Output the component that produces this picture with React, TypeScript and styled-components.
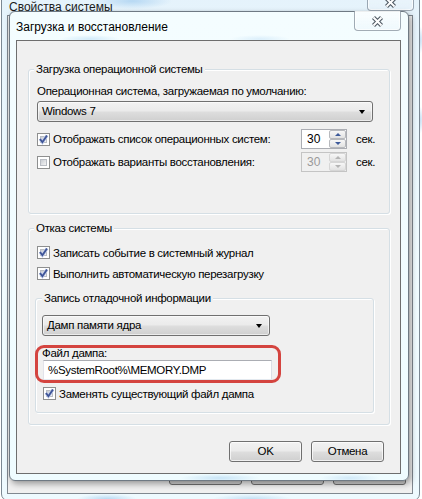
import React from 'react';
import styled, { createGlobalStyle } from 'styled-components';

const Global = createGlobalStyle`
  html, body { margin: 0; padding: 0; background: #ffffff; }
  body {
    width: 422px; height: 499px; overflow: hidden;
    font-family: "Liberation Sans", Arial, sans-serif;
    font-size: 12px; color: #000;
  }
  * { box-sizing: border-box; }
`;

const Desktop = styled.div`
  position: relative;
  width: 422px;
  height: 499px;
  overflow: hidden;
  background: radial-gradient(ellipse 6px 14px at 419px 40px, #bcd9f0 0%, rgba(255,255,255,0) 100%),
    radial-gradient(ellipse 6px 14px at 419px 120px, #bcd9f0 0%, rgba(255,255,255,0) 100%),
    #ffffff;
`;

const BackWindow = styled.div`
  position: absolute;
  left: 1px;
  top: -30px;
  width: 419px;
  height: 531px;
  border: 1px solid #7b8893;
  border-radius: 7px;
  padding: 0 6px 6px 5px;
  display: flex;
  flex-direction: column;
  background:
    radial-gradient(ellipse 40px 8px at 130px 30px, #b6d8f3 0%, rgba(230,244,252,0) 100%),
    radial-gradient(ellipse 30px 5px at 105px 528px, #b9d9f1 0%, rgba(230,244,252,0) 100%),
    radial-gradient(ellipse 40px 5px at 250px 528px, #c4e0f4 0%, rgba(230,244,252,0) 100%),
    linear-gradient(#e4f2fb, #f1fcff 60%, #eefaff);
`;

const BackTitleBar = styled.div`
  height: 44px;
  flex: none;
  padding-left: 2px;
  padding-top: 29px;
  font-size: 12px;
  line-height: 15px;
  color: #1b1b1b;
`;

const BackClient = styled.div`
  flex: 1;
  background: #f0f0f0;
  border: 1px solid #808890;
  display: flex;
  flex-direction: column;
  justify-content: flex-end;
  padding: 0 6px 8px 0;
`;

const BackButtons = styled.div`
  display: flex;
  justify-content: flex-end;
  gap: 9px;
`;

const BackButton = styled.div`
  width: 73px;
  height: 23px;
  border: 1px solid #707070;
  border-radius: 3px;
  background: linear-gradient(#f2f2f2, #dddddd 50%, #cfcfcf);
`;

const CaptionClose = styled.div<{ $back?: boolean }>`
  position: absolute;
  top: ${(p) => (p.$back ? '0px' : '-1px')};
  right: ${(p) => (p.$back ? '5px' : '7px')};
  width: 47px;
  height: ${(p) => (p.$back ? '40px' : '20px')};
  border: 1px solid rgba(90, 105, 120, 0.55);
  border-top: none;
  border-radius: 0 0 4px 4px;
  background: linear-gradient(rgba(255,255,255,0.6), rgba(230,240,248,0.35));
  box-shadow: inset 0 0 0 1px rgba(255,255,255,0.7);
  display: flex;
  align-items: flex-end;
  justify-content: center;
  padding-bottom: ${(p) => (p.$back ? '2px' : '3px')};
`;

const Dialog = styled.div`
  position: absolute;
  left: 9px;
  top: 11px;
  width: 400px;
  height: 470px;
  border: 1px solid #6f7a84;
  border-radius: 6px;
  padding: 0 7px 6px 6px;
  display: flex;
  flex-direction: column;
  box-shadow: 2px 3px 6px rgba(0, 0, 0, 0.35), 0 0 1px rgba(0,0,0,0.2);
  background:
    radial-gradient(ellipse 30px 4px at 80px 27px, #d2ebfa 0%, rgba(240,252,255,0) 100%),
    radial-gradient(ellipse 30px 4px at 250px 27px, #dbeffb 0%, rgba(240,252,255,0) 100%),
    radial-gradient(ellipse 40px 4px at 210px 466px, #c8e4f6 0%, rgba(240,252,255,0) 100%),
    radial-gradient(ellipse 30px 4px at 340px 466px, #d1e9f8 0%, rgba(240,252,255,0) 100%),
    linear-gradient(#f4fdff, #effcff);
`;

const TitleBar = styled.div`
  height: 28px;
  flex: none;
  display: flex;
  align-items: center;
  padding-top: 1px;
  font-size: 12px;
  color: #000;
`;

const Client = styled.div`
  flex: 1;
  background: #f0f0f0;
  border: 1px solid #6e6e6e;
  display: flex;
  flex-direction: column;
  font-size: 11.5px;
  letter-spacing: -0.3px;
`;

const Group = styled.div<{ $mt: number; $ml: number; $mr: number }>`
  margin: ${(p) => p.$mt}px ${(p) => p.$mr}px 0 ${(p) => p.$ml}px;
  border: 1px solid #d5dfe5;
  border-radius: 3px;
  box-shadow: inset 1px 1px 0 #ffffff, 1px 1px 0 #ffffff;
`;

const Legend = styled.div<{ $ml: number }>`
  width: fit-content;
  margin: -8px 0 0 ${(p) => p.$ml}px;
  padding: 0 2px;
  background: #f0f0f0;
  line-height: 15px;
  color: #000;
`;

const Body = styled.div<{ $pad: string }>`
  padding: ${(p) => p.$pad};
  display: flex;
  flex-direction: column;
`;

const Label = styled.div<{ $mt: number; $lh?: number }>`
  margin-top: ${(p) => p.$mt}px;
  line-height: ${(p) => p.$lh ?? 15}px;
  white-space: nowrap;
`;

const Combo = styled.div<{ $mt: number; $w: number }>`
  margin-top: ${(p) => p.$mt}px;
  width: ${(p) => p.$w}px;
  height: 21px;
  border: 1px solid #707070;
  border-radius: 3px;
  background: linear-gradient(#f2f2f2 0%, #ebebeb 45%, #dddddd 55%, #cfcfcf 100%);
  box-shadow: inset 0 0 0 1px rgba(255,255,255,0.6);
  display: flex;
  align-items: center;
  justify-content: space-between;
  padding: 0 7px 0 4px;
  line-height: 15px;
`;

const Arrow = styled.div`
  width: 0;
  height: 0;
  border-left: 3.5px solid transparent;
  border-right: 3.5px solid transparent;
  border-top: 4px solid #000;
`;

const Row = styled.div<{ $mt: number; $h?: number; $ml?: number }>`
  margin-top: ${(p) => p.$mt}px;
  margin-left: ${(p) => p.$ml ?? 0}px;
  height: ${(p) => p.$h ?? 15}px;
  display: flex;
  align-items: center;
  white-space: nowrap;
`;

const CheckPart = styled.div<{ $w?: number }>`
  display: flex;
  align-items: center;
  gap: 3px;
  width: ${(p) => (p.$w ? `${p.$w}px` : 'auto')};
  flex: none;
`;

const Box = styled.div`
  width: 13px;
  height: 13px;
  flex: none;
  border: 1px solid #8e8f8f;
  background: #ffffff;
  padding: 2px;
  position: relative;
`;

const BoxInner = styled.div`
  width: 7px;
  height: 7px;
  border: 1px solid #b9bdc4;
  background: linear-gradient(135deg, #c9cdd3, #f4f4f4);
`;

const CheckMark = styled.svg`
  position: absolute;
  left: 0;
  top: 0;
`;

const Spin = styled.div<{ $disabled?: boolean }>`
  width: 46px;
  height: 20px;
  flex: none;
  border: 1px solid ${(p) => (p.$disabled ? '#c4c4c4' : '#abadb3')};
  background: ${(p) => (p.$disabled ? '#f0f0f0' : '#ffffff')};
  color: ${(p) => (p.$disabled ? '#9a9a9a' : '#000')};
  display: flex;
  align-items: center;
  justify-content: space-between;
  padding-left: 5px;
  line-height: 15px;
  font-size: 12px;
  letter-spacing: 0;
`;

const SpinButtons = styled.div`
  width: 17px;
  height: 18px;
  display: flex;
  flex-direction: column;
`;

const SpinBtn = styled.div<{ $disabled?: boolean }>`
  flex: 1;
  border: 1px solid ${(p) => (p.$disabled ? '#d6d6d6' : '#b7b9bd')};
  border-radius: 2px;
  background: linear-gradient(#f7f7f7, #e2e2e2);
  display: flex;
  align-items: center;
  justify-content: center;
`;

const TriUp = styled.div<{ $disabled?: boolean }>`
  width: 0;
  height: 0;
  border-left: 3px solid transparent;
  border-right: 3px solid transparent;
  border-bottom: 3px solid ${(p) => (p.$disabled ? '#b4b4b4' : '#3d5a9a')};
`;

const TriDown = styled(TriUp)`
  border-bottom: none;
  border-top: 3px solid ${(p) => (p.$disabled ? '#b4b4b4' : '#3d5a9a')};
`;

const Sec = styled.span`
  margin-left: 9px;
`;

const DumpField = styled.div`
  position: relative;
  margin-top: 11px;
  width: 230px;
  display: flex;
  flex-direction: column;
`;

const Highlight = styled.div`
  position: absolute;
  left: -7px;
  top: -2px;
  right: -9px;
  bottom: -3px;
  border: 3px solid #d4443f;
  border-radius: 9px;
  pointer-events: none;
`;

const TextInput = styled.div`
  margin-left: 1px;
  width: 229px;
  height: 20px;
  border: 1px solid #abadb3;
  border-color: #abadb3 #dbdfe6 #e3e9ef #e2e3ea;
  background: #ffffff;
  display: flex;
  align-items: center;
  padding-left: 4px;
  line-height: 15px;
`;

const ButtonRow = styled.div`
  margin-top: 16px;
  padding-right: 16px;
  display: flex;
  justify-content: flex-end;
  gap: 9px;
`;

const Button = styled.div`
  width: 73px;
  height: 21px;
  border: 1px solid #707070;
  border-radius: 3px;
  background: linear-gradient(#f2f2f2 0%, #ebebeb 45%, #dddddd 55%, #cfcfcf 100%);
  box-shadow: inset 0 0 0 1px rgba(255,255,255,0.7);
  display: flex;
  align-items: center;
  justify-content: center;
  line-height: 15px;
`;

const CloseGlyph: React.FC = () => (
  <svg width="13" height="11" viewBox="0 0 13 11">
    <path d="M2.5 1.5 L10.5 9.5 M10.5 1.5 L2.5 9.5" stroke="#4f5963" strokeWidth="4.2" strokeLinecap="butt" />
    <path d="M2.5 1.5 L10.5 9.5 M10.5 1.5 L2.5 9.5" stroke="#ffffff" strokeWidth="2" strokeLinecap="butt" />
  </svg>
);

const CheckBox: React.FC<{ checked?: boolean }> = ({ checked }) => (
  <Box>
    <BoxInner />
    {checked && (
      <CheckMark width="11" height="11" viewBox="0 0 11 11">
        <path d="M2 5 L4.4 8.2 L9 1.5" fill="none" stroke="#c8d2ea" strokeWidth="3.2" />
        <path d="M2 5 L4.4 8.2 L9 1.5" fill="none" stroke="#3f5598" strokeWidth="1.9" />
      </CheckMark>
    )}
  </Box>
);

const SpinBox: React.FC<{ value: string; disabled?: boolean }> = ({ value, disabled }) => (
  <Spin $disabled={disabled}>
    <span>{value}</span>
    <SpinButtons>
      <SpinBtn $disabled={disabled}>
        <TriUp $disabled={disabled} />
      </SpinBtn>
      <SpinBtn $disabled={disabled}>
        <TriDown $disabled={disabled} />
      </SpinBtn>
    </SpinButtons>
  </Spin>
);

export default function App() {
  return (
    <>
      <Global />
      <Desktop>
        <BackWindow>
          <BackTitleBar>Свойства системы</BackTitleBar>
          <CaptionClose $back>
            <CloseGlyph />
          </CaptionClose>
          <BackClient>
            <BackButtons>
              <BackButton />
              <BackButton />
              <BackButton />
            </BackButtons>
          </BackClient>
        </BackWindow>

        <Dialog>
          <TitleBar>Загрузка и восстановление</TitleBar>
          <CaptionClose>
            <CloseGlyph />
          </CaptionClose>
          <Client>
            <Group $mt={28} $ml={11} $mr={10}>
              <Legend $ml={5}>Загрузка операционной системы</Legend>
              <Body $pad="0 15px 41px 8px">
                <Label $mt={7}>Операционная система, загружаемая по умолчанию:</Label>
                <Combo $mt={2} $w={336}>
                  <span>Windows 7</span>
                  <Arrow />
                </Combo>
                <Row $mt={7} $h={20}>
                  <CheckPart $w={264}>
                    <CheckBox checked />
                    <span>Отображать список операционных систем:</span>
                  </CheckPart>
                  <SpinBox value="30" />
                  <Sec>сек.</Sec>
                </Row>
                <Row $mt={3} $h={20}>
                  <CheckPart $w={264}>
                    <CheckBox />
                    <span>Отображать варианты восстановления:</span>
                  </CheckPart>
                  <SpinBox value="30" disabled />
                  <Sec>сек.</Sec>
                </Row>
              </Body>
            </Group>

            <Group $mt={14} $ml={11} $mr={10}>
              <Legend $ml={5}>Отказ системы</Legend>
              <Body $pad="0 15px 11px 8px">
                <Row $mt={9}>
                  <CheckPart>
                    <CheckBox checked />
                    <span>Записать событие в системный журнал</span>
                  </CheckPart>
                </Row>
                <Row $mt={6}>
                  <CheckPart>
                    <CheckBox checked />
                    <span>Выполнить автоматическую перезагрузку</span>
                  </CheckPart>
                </Row>
                <Group $mt={17} $ml={-2} $mr={0}>
                  <Legend $ml={6}>Запись отладочной информации</Legend>
                  <Body $pad="0 0 11px 6px">
                    <Combo $mt={9} $w={228}>
                      <span>Дамп памяти ядра</span>
                      <Arrow />
                    </Combo>
                    <DumpField>
                      <Label $mt={0} $lh={13}>Файл дампа:</Label>
                      <TextInput>%SystemRoot%\MEMORY.DMP</TextInput>
                      <Highlight />
                    </DumpField>
                    <Row $mt={6} $ml={1}>
                      <CheckPart>
                        <CheckBox checked />
                        <span>Заменять существующий файл дампа</span>
                      </CheckPart>
                    </Row>
                  </Body>
                </Group>
              </Body>
            </Group>

            <ButtonRow>
              <Button>OK</Button>
              <Button>Отмена</Button>
            </ButtonRow>
          </Client>
        </Dialog>
      </Desktop>
    </>
  );
}
